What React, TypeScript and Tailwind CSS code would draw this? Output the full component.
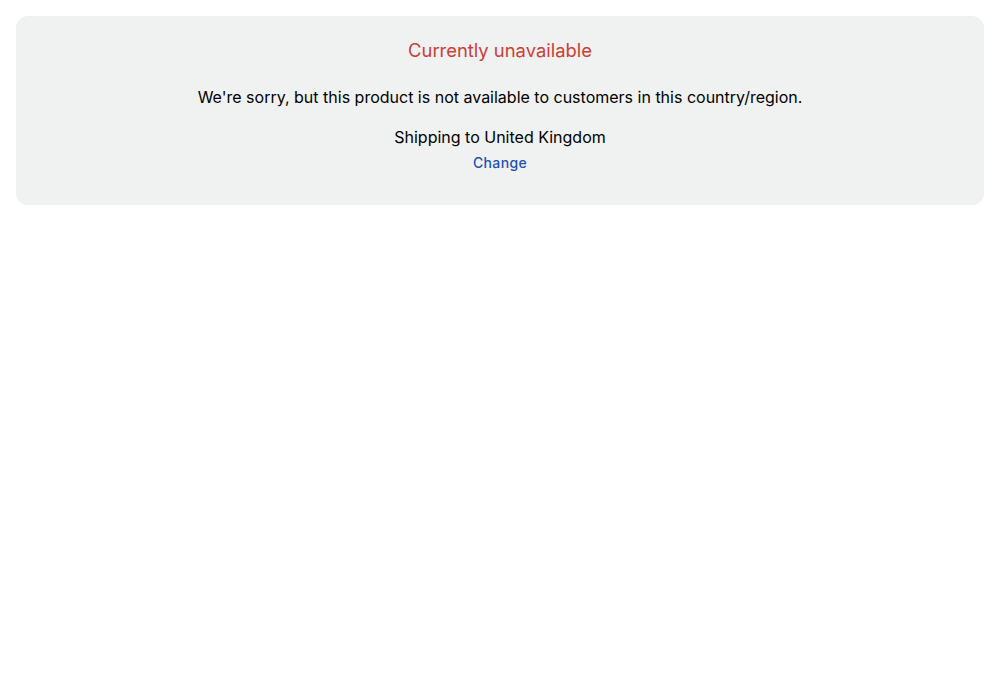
export default function App() {
  return (
    <div className="min-h-[680px] bg-white p-4 font-['Inter',sans-serif]">
      <div className="flex flex-col items-center rounded-xl bg-[#f0f2f1] px-6 pt-[22px] pb-[32px] text-center">
        <h2 className="text-[18.4px] leading-6 text-[#cc3e37]">Currently unavailable</h2>
        <p className="mt-[23px] text-base leading-6 text-black">
          We're sorry, but this product is not available to customers in this country/region.
        </p>
        <p className="mt-4 text-base leading-6 text-black">Shipping to United Kingdom</p>
        <a href="#" className="mt-1 text-sm font-medium leading-5 tracking-wide text-[#2350b6]">
          Change
        </a>
      </div>
    </div>
  );
}
